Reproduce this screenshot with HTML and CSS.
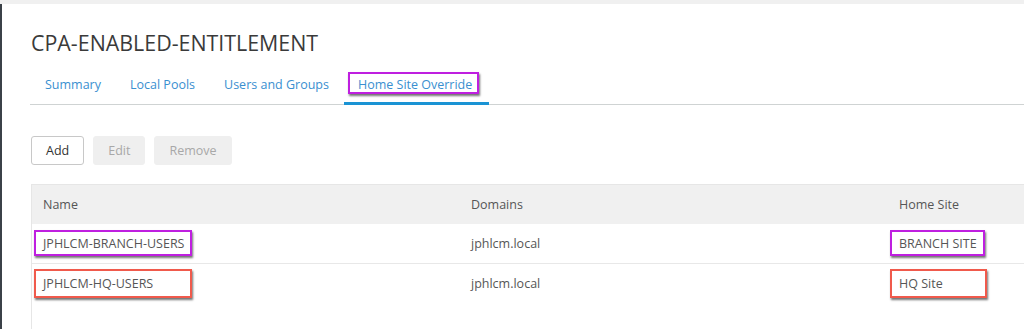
FILE: index.html
```html
<!DOCTYPE html>
<html lang="en">
<head>
  <meta charset="UTF-8" />
  <meta name="viewport" content="width=device-width, initial-scale=1.0" />
  <title>CPA-ENABLED-ENTITLEMENT</title>
  <link rel="stylesheet" href="styles.css">
</head>
<body>
  <div class="topbar"></div>
  <div class="layout">
    <div class="sidebar"></div>
    <main class="content">
      <h1>CPA-ENABLED-ENTITLEMENT</h1>
      <nav class="tabs">
        <a class="tab">Summary</a>
        <a class="tab">Local Pools</a>
        <a class="tab">Users and Groups</a>
        <a class="tab active"><span class="mark purple">Home Site Override</span></a>
      </nav>

      <div class="toolbar">
        <button class="btn">Add</button>
        <button class="btn" disabled>Edit</button>
        <button class="btn" disabled>Remove</button>
      </div>

      <div class="grid">
        <div class="row head">
          <div class="cell">Name</div>
          <div class="cell">Domains</div>
          <div class="cell">Home Site</div>
        </div>
        <div class="row">
          <div class="cell"><span class="mark purple">JPHLCM-BRANCH-USERS</span></div>
          <div class="cell">jphlcm.local</div>
          <div class="cell"><span class="mark purple">BRANCH SITE</span></div>
        </div>
        <div class="row">
          <div class="cell"><span class="mark red w-name">JPHLCM-HQ-USERS</span></div>
          <div class="cell">jphlcm.local</div>
          <div class="cell"><span class="mark red w-site">HQ Site</span></div>
        </div>
      </div>
    </main>
  </div>
</body>
</html>
```

FILE: styles.css
```css
html, body {
  margin: 0;
  height: 100%;
  overflow: hidden;
}
body {
  font-family: "Open Sans", "Noto Sans", sans-serif;
  background: #fff;
  color: #565656;
}
.topbar {
  height: 4px;
  background: #f0f0f0;
}
.layout {
  display: flex;
  height: calc(100% - 4px);
}
.sidebar {
  width: 2px;
  background: #3b4148;
  flex-shrink: 0;
}
.content {
  flex: 1;
  padding-left: 29px;
  min-width: 0;
  overflow: hidden;
}
h1 {
  margin: 24px 0 0;
  font-size: 21.4px;
  line-height: 30px;
  font-weight: 400;
  color: #3a3a3a;
}
.tabs {
  display: flex;
  margin-top: 8px;
  padding-left: 1px;
  margin-left: -1px;
  border-bottom: 1px solid #cfd3d3;
}
.tab {
  font-size: 12.5px;
  line-height: 20px;
  padding: 9px 15px 7px 14px;
  color: #3a8fd0;
  border-bottom: 3px solid transparent;
  margin-bottom: -1px;
  cursor: pointer;
}
.tab.active {
  border-bottom-color: #1a93d4;
  padding-right: 17px;
}
.mark {
  position: relative;
}
.mark::after {
  content: "";
  position: absolute;
  top: -5px;
  bottom: -4px;
  left: -9px;
  right: -8px;
  border: 2px solid;
  box-shadow: 1px 2px 2px rgba(0, 0, 0, 0.55);
}
.tab .mark::after {
  top: -4px;
  bottom: -1px;
  left: -10px;
  right: -7px;
}
.mark.purple::after {
  border-color: #bf1fe0;
}
.mark.red::after {
  border-color: #f05a4c;
}
.w-name {
  display: inline-block;
  width: 141px;
}
.w-site {
  display: inline-block;
  width: 80px;
}
.toolbar {
  display: flex;
  gap: 9px;
  margin-top: 31px;
}
.btn {
  font-family: inherit;
  font-size: 12.5px;
  height: 29px;
  padding: 0 14px;
  border: 1px solid #c8c8c8;
  border-radius: 3px;
  background: #fff;
  color: #333;
}
.btn:disabled {
  background: #efefef;
  border-color: #efefef;
  color: #a8a8a8;
}
.grid {
  margin-top: 19px;
  border-left: 1px solid #e6e6e6;
  height: 145px;
}
.row {
  display: grid;
  grid-template-columns: 427px 428px 1fr;
  height: 39px;
  align-items: center;
  border-bottom: 1px solid #e8e8e8;
  font-size: 12.5px;
}
.row:last-child {
  border-bottom: none;
}
.row.head {
  background: #f0f0f0;
  border-top: 1px solid #e6e6e6;
  border-bottom: none;
  height: 39px;
  color: #565656;
}
.cell {
  padding: 0 11px;
  line-height: 20px;
}
.row .cell + .cell {
  padding-left: 12px;
}
```
